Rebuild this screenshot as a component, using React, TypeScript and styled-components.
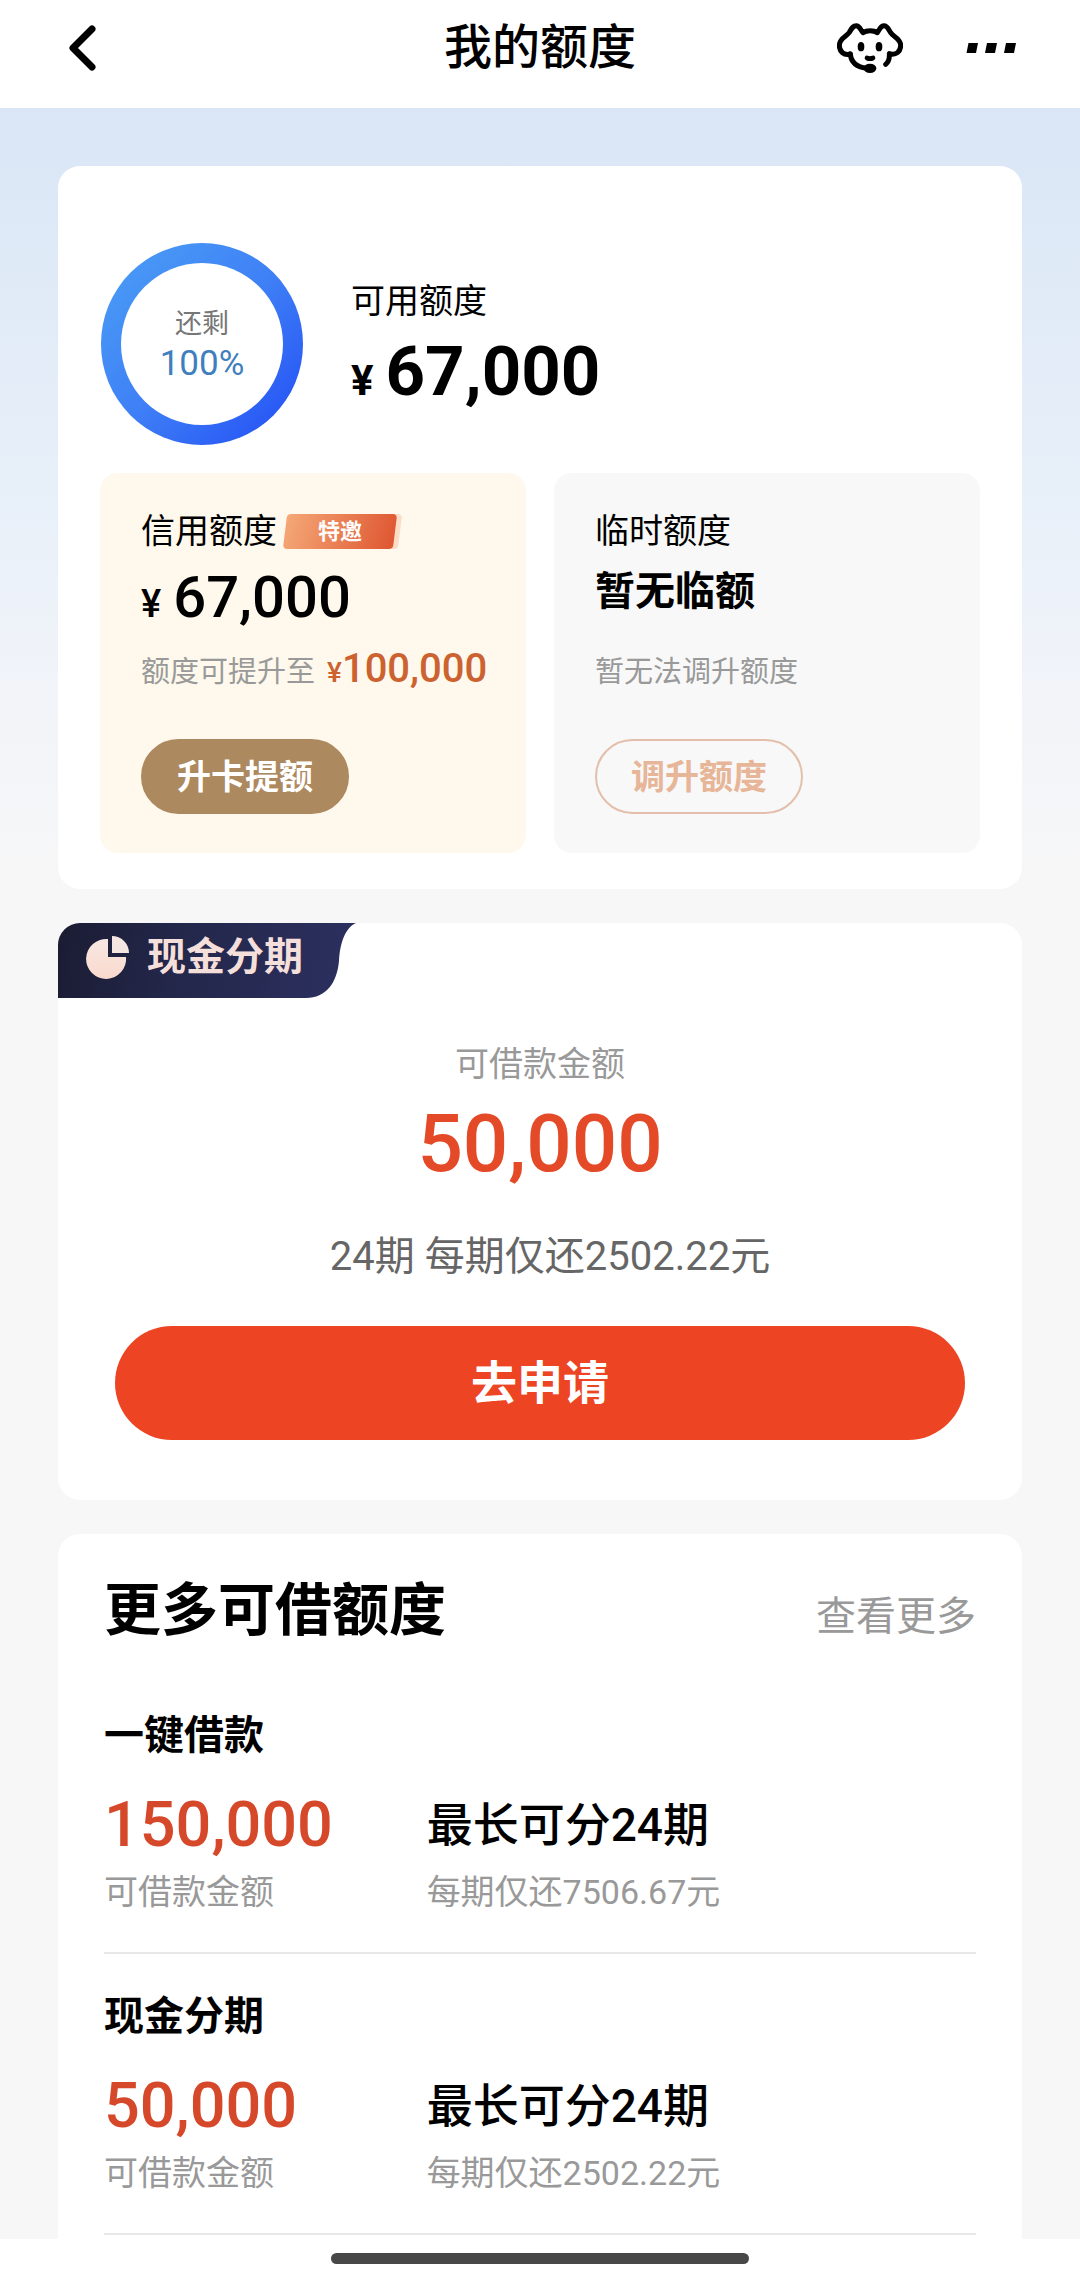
import React from 'react';
import styled, { createGlobalStyle } from 'styled-components';

const GlobalStyle = createGlobalStyle`
  * { box-sizing: border-box; }
  body {
    margin: 0;
    background: #f7f7f7;
    color: #000;
    font-family: Roboto, "Noto Sans CJK SC", sans-serif;
  }
  h1, h2, h3, p, ul { margin: 0; padding: 0; }
  ul { list-style: none; }
  button { font-family: inherit; border: 0; padding: 0; cursor: pointer; }
`;

const Page = styled.div`
  min-height: 100vh;
  display: flex;
  flex-direction: column;
`;

const Header = styled.header`
  height: 108px;
  padding: 0 64px 12px;
  background: #fff;
  display: grid;
  grid-template-columns: 1fr auto 1fr;
  align-items: center;
`;

const Title = styled.h1`
  font-size: 48px;
  line-height: 64px;
  font-weight: 500;
`;

const IconButton = styled.button`
  display: flex;
  background: none;
`;

const Actions = styled.div`
  display: flex;
  align-items: center;
  justify-content: flex-end;
  gap: 63px;
`;

const Main = styled.main`
  flex: 1;
  padding: 58px 58px 0;
  display: flex;
  flex-direction: column;
  gap: 34px;
  background: linear-gradient(#dae6f6 0, #e8f0f9 400px, #f2f4f9 600px, #f7f7f7 780px);
`;

const Card = styled.section`
  background: #fff;
  border-radius: 22px;
  overflow: hidden;
`;

const QuotaCard = styled(Card)`
  padding: 77px 42px 36px;
`;

const Summary = styled.div`
  display: flex;
  align-items: center;
  gap: 48px;
  margin: 0 0 28px 1px;
`;

const SummaryText = styled.div`
  padding-top: 14px;
`;

const Ring = styled.div`
  width: 202px;
  height: 202px;
  border: 20px solid transparent;
  border-radius: 50%;
  background:
    linear-gradient(#fff, #fff) padding-box,
    linear-gradient(135deg, #4796f5 15%, #3f80f6 50%, #2a5bf5 85%) border-box;
  display: flex;
  flex-direction: column;
  align-items: center;
  justify-content: center;
`;

const RingLabel = styled.span`
  font-size: 27px;
  line-height: 40px;
  color: #777;
`;

const RingValue = styled.span`
  font-size: 35px;
  line-height: 40px;
  color: #3f7fbe;
`;

const Label = styled.p`
  display: flex;
  align-items: center;
  gap: 8px;
  font-size: 34px;
  line-height: 48px;
`;

const Total = styled.p`
  display: flex;
  align-items: baseline;
  gap: 12px;
  margin-top: 3px;
  font-size: 69px;
  line-height: 88px;
  font-weight: 700;
`;

const Yen = styled.span<{ $size: number }>`
  font-size: ${(p) => p.$size}px;
`;

const Panels = styled.div`
  display: grid;
  grid-template-columns: 1fr 1fr;
  gap: 28px;
`;

const Panel = styled.div<{ $bg: string }>`
  padding: 34px 0 39px 41px;
  border-radius: 18px;
  background: ${(p) => p.$bg};
  display: flex;
  flex-direction: column;
  align-items: flex-start;
`;

const Tag = styled.span`
  position: relative;
  z-index: 0;
  width: 110px;
  height: 35px;
  font-size: 22px;
  line-height: 35px;
  font-weight: 700;
  text-align: center;
  color: #fff;

  &::before,
  &::after {
    content: '';
    position: absolute;
    z-index: -1;
    inset: 0;
    border-radius: 4px;
    transform: skewX(-7deg);
    background: linear-gradient(100deg, #f5a877, #de5631);
  }
  &::before {
    left: 12px;
    right: -5px;
    background: #fbdcc6;
  }
`;

const PanelAmount = styled.p`
  display: flex;
  align-items: baseline;
  gap: 12px;
  margin-top: 6px;
  height: 72px;
  font-size: 58px;
  line-height: 72px;
  font-weight: 500;
`;

const PanelStatus = styled.p`
  margin-top: 6px;
  height: 72px;
  font-size: 40px;
  line-height: 62px;
  font-weight: 700;
`;

const PanelNote = styled.p`
  display: flex;
  align-items: baseline;
  gap: 12px;
  height: 48px;
  margin: 12px 0 46px;
  font-size: 29px;
  line-height: 48px;
  color: #999;
  white-space: nowrap;

  &::after {
    content: '\\200b';
    font-size: 40px;
  }
`;

const Raise = styled.strong`
  font-size: 40px;
  font-weight: 500;
  color: #cb6230;
`;

const PillButton = styled.button<{ $outline?: boolean }>`
  height: 75px;
  padding: 0 34px;
  border: 2px solid ${(p) => (p.$outline ? '#e3bfab' : '#ad8960')};
  border-radius: 38px;
  background: ${(p) => (p.$outline ? 'transparent' : '#ad8960')};
  color: ${(p) => (p.$outline ? '#e7b597' : '#fff')};
  font-size: 34px;
  line-height: 48px;
  font-weight: 700;
`;

const CashCard = styled(Card)`
  display: flex;
  flex-direction: column;
`;

const Ribbon = styled.h2`
  align-self: flex-start;
  width: 300px;
  height: 75px;
  padding: 0 0 7px 28px;
  display: flex;
  align-items: center;
  gap: 18px;
  background: linear-gradient(100deg, #1b1c33, #23274a 40%, #2c3060);
  clip-path: path('M0 0H298C287 5 282 20 281 38C279 60 268 75 248 75H0Z');
  color: #f5dfdb;
  font-size: 39px;
  line-height: 56px;
  font-weight: 700;
`;

const CashBody = styled.div`
  padding: 42px 57px 60px;
  text-align: center;
`;

const Muted = styled.p`
  font-size: 34px;
  line-height: 48px;
  color: #999;
`;

const CashAmount = styled.p`
  margin: 8px 0 37px;
  font-size: 80px;
  line-height: 96px;
  font-weight: 500;
  color: #e44a27;
`;

const CashPlan = styled.p`
  padding-left: 20px;
  font-size: 40px;
  line-height: 56px;
  color: #666;
`;

const ApplyButton = styled.button`
  width: 100%;
  height: 114px;
  margin-top: 41px;
  padding-bottom: 8px;
  border-radius: 57px;
  background: #ed4424;
  color: #fff;
  font-size: 46px;
  font-weight: 700;
`;

const MoreCard = styled(Card)`
  padding: 37px 46px 4px;
  border-radius: 22px 22px 0 0;
`;

const MoreHead = styled.div`
  display: flex;
  align-items: baseline;
  justify-content: space-between;
  margin-bottom: 22px;
`;

const MoreTitle = styled.h2`
  font-size: 57px;
  line-height: 80px;
  font-weight: 700;
`;

const MoreLink = styled.a`
  font-size: 40px;
  line-height: 56px;
  color: #999;
  text-decoration: none;
`;

const Offer = styled.li`
  padding: 35px 0 36px;
  border-bottom: 2px solid #e8e8e8;
`;

const OfferName = styled.h3`
  margin-bottom: 21px;
  font-size: 40px;
  line-height: 56px;
  font-weight: 700;
`;

const OfferGrid = styled.div`
  display: grid;
  grid-template-columns: 37% 1fr;
  row-gap: 3px;
`;

const OfferAmount = styled.p`
  font-size: 63px;
  line-height: 80px;
  font-weight: 500;
  color: #d5482a;
`;

const OfferTerm = styled.p`
  font-size: 46px;
  line-height: 80px;
  font-weight: 500;
`;

const Footer = styled.footer`
  height: 44px;
  padding-top: 14px;
  background: #fff;
`;

const HomeBar = styled.div`
  width: 418px;
  height: 11px;
  margin: 0 auto;
  border-radius: 6px;
  background: #484848;
`;

const BackIcon = () => (
  <svg width="34" height="48" viewBox="0 0 34 48" fill="none" stroke="#000" strokeWidth="7" strokeLinecap="round" strokeLinejoin="round">
    <path d="M28 5L9 24L28 43" />
  </svg>
);

const ServiceIcon = () => (
  <svg width="66" height="50" viewBox="111 66 198 150" fill="none" stroke="#000" strokeWidth="15" strokeLinecap="round" strokeLinejoin="round">
    <path d="M151 159C132 165 118 152 118 133C118 112 138 108 148 94C155 82 159 74 169 74C179 74 181 86 189 95C200 87 221 87 232 95C239 86 241 74 252 74C262 74 265 84 272 95C280 108 302 112 302 133C302 152 288 164 268 158C269 172 264 184 257 190" />
    <path d="M151 159C153 184 170 198 200 202" />
    <ellipse cx="210" cy="202" rx="19" ry="14" fill="#000" stroke="none" />
    <ellipse cx="183" cy="137" rx="10" ry="14" fill="#000" stroke="none" />
    <ellipse cx="237" cy="137" rx="10" ry="14" fill="#000" stroke="none" />
    <path d="M201 171Q210 175 219 171" strokeWidth="14" />
  </svg>
);

const MoreIcon = () => (
  <svg width="50" height="12" viewBox="0 0 50 12" fill="#000">
    <path d="M2.500 1H12L10 11H0.500ZM21 1H31L29 11H19ZM40 1H50L48 11H38Z" />
  </svg>
);

const PieIcon = () => (
  <svg width="43" height="43" viewBox="0 0 43 43">
    <defs>
      <linearGradient id="pie" x1="0" y1="0" x2="0" y2="1">
        <stop offset="0" stopColor="#f6e8e4" />
        <stop offset="1" stopColor="#fbd9cc" />
      </linearGradient>
    </defs>
    <path fill="url(#pie)" d="M22 3V21H40A20 20 0 1 1 22 3Z" />
    <path fill="#f6e6e2" d="M26 0A17 17 0 0 1 43 17H26Z" />
  </svg>
);

const offers = [
  { name: '一键借款', amount: '150,000', term: '最长可分24期', plan: '每期仅还7506.67元' },
  { name: '现金分期', amount: '50,000', term: '最长可分24期', plan: '每期仅还2502.22元' },
];

export default function App() {
  return (
    <Page>
      <GlobalStyle />
      <Header>
        <IconButton aria-label="返回"><BackIcon /></IconButton>
        <Title>我的额度</Title>
        <Actions>
          <IconButton aria-label="客服"><ServiceIcon /></IconButton>
          <IconButton aria-label="更多"><MoreIcon /></IconButton>
        </Actions>
      </Header>
      <Main>
        <QuotaCard>
          <Summary>
            <Ring>
              <RingLabel>还剩</RingLabel>
              <RingValue>100%</RingValue>
            </Ring>
            <SummaryText>
              <Label>可用额度</Label>
              <Total><Yen $size={42}>¥</Yen>67,000</Total>
            </SummaryText>
          </Summary>
          <Panels>
            <Panel $bg="#fef9ec">
              <Label>信用额度<Tag>特邀</Tag></Label>
              <PanelAmount><Yen $size={38}>¥</Yen>67,000</PanelAmount>
              <PanelNote>额度可提升至<Raise><Yen $size={28}>¥</Yen>100,000</Raise></PanelNote>
              <PillButton>升卡提额</PillButton>
            </Panel>
            <Panel $bg="#f8f8f8">
              <Label>临时额度</Label>
              <PanelStatus>暂无临额</PanelStatus>
              <PanelNote>暂无法调升额度</PanelNote>
              <PillButton $outline>调升额度</PillButton>
            </Panel>
          </Panels>
        </QuotaCard>
        <CashCard>
          <Ribbon><PieIcon />现金分期</Ribbon>
          <CashBody>
            <Muted>可借款金额</Muted>
            <CashAmount>50,000</CashAmount>
            <CashPlan>24期 每期仅还2502.22元</CashPlan>
            <ApplyButton>去申请</ApplyButton>
          </CashBody>
        </CashCard>
        <MoreCard>
          <MoreHead>
            <MoreTitle>更多可借额度</MoreTitle>
            <MoreLink href="#more">查看更多</MoreLink>
          </MoreHead>
          <ul>
            {offers.map((o) => (
              <Offer key={o.name}>
                <OfferName>{o.name}</OfferName>
                <OfferGrid>
                  <OfferAmount>{o.amount}</OfferAmount>
                  <OfferTerm>{o.term}</OfferTerm>
                  <Muted>可借款金额</Muted>
                  <Muted>{o.plan}</Muted>
                </OfferGrid>
              </Offer>
            ))}
          </ul>
        </MoreCard>
      </Main>
      <Footer><HomeBar /></Footer>
    </Page>
  );
}
